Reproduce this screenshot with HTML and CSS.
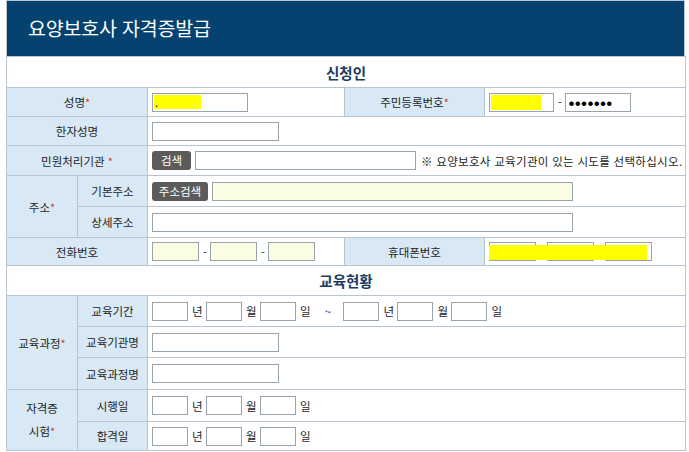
FILE: index.html
```html
<!DOCTYPE html>
<html lang="ko">
<head>
<meta charset="utf-8">
<title>요양보호사 자격증발급</title>
<link rel="stylesheet" href="styles.css">
</head>
<body>
<div class="wrap">
  <div class="head"><h1>요양보호사 자격증발급</h1></div>
  <table class="form">
    <colgroup>
      <col class="c1"><col class="c2"><col class="c3"><col class="c4"><col class="c5">
    </colgroup>
    <tr class="r31"><td colspan="5" class="sec">신청인</td></tr>
    <tr class="r29">
      <th colspan="2">성명<span class="req">*</span></th>
      <td><div class="line"><input class="in w96 redact" type="text" value="."></div></td>
      <th>주민등록번호<span class="req">*</span></th>
      <td><div class="line"><input class="in w65 redact2" type="text"><span class="dash">-</span><input class="in w66 pw" type="text" value="●●●●●●●"></div></td>
    </tr>
    <tr class="r29">
      <th colspan="2">한자성명</th>
      <td colspan="3"><div class="line"><input class="in w126" type="text"></div></td>
    </tr>
    <tr class="r30">
      <th colspan="2">민원처리기관 <span class="req">*</span></th>
      <td colspan="3"><div class="line"><button class="btn b39">검색</button><input class="in w221" type="text"><span class="note">※ 요양보호사 교육기관이 있는 시도를 선택하십시오.</span></div></td>
    </tr>
    <tr class="r31">
      <th rowspan="2">주소<span class="req">*</span></th>
      <th>기본주소</th>
      <td colspan="3"><div class="line"><button class="btn b56">주소검색</button><input class="in w360 yel" type="text"></div></td>
    </tr>
    <tr class="r31">
      <th>상세주소</th>
      <td colspan="3"><div class="line"><input class="in w421" type="text"></div></td>
    </tr>
    <tr class="r28">
      <th colspan="2">전화번호</th>
      <td><div class="line"><input class="in w47 yel" type="text"><span class="dash">-</span><input class="in w47 yel" type="text"><span class="dash">-</span><input class="in w47 yel" type="text"></div></td>
      <th>휴대폰번호</th>
      <td><div class="line ov"><input class="in w47" type="text"><span class="dash">-</span><input class="in w47" type="text"><span class="dash">-</span><input class="in w47" type="text"><span class="mark"></span></div></td>
    </tr>
    <tr class="r30"><td colspan="5" class="sec">교육현황</td></tr>
    <tr class="r31">
      <th rowspan="3">교육과정<span class="req">*</span></th>
      <th>교육기간</th>
      <td colspan="3"><div class="line date">
        <input class="in w36" type="text"><span>년</span><input class="in w36" type="text"><span>월</span><input class="in w36" type="text"><span>일</span>
        <span class="tilde">~</span>
        <input class="in w36" type="text"><span>년</span><input class="in w36" type="text"><span>월</span><input class="in w36" type="text"><span>일</span>
      </div></td>
    </tr>
    <tr class="r31">
      <th>교육기관명</th>
      <td colspan="3"><div class="line"><input class="in w126" type="text"></div></td>
    </tr>
    <tr class="r32">
      <th>교육과정명</th>
      <td colspan="3"><div class="line"><input class="in w126" type="text"></div></td>
    </tr>
    <tr class="r32">
      <th rowspan="2" class="two">자격증<br>시험<span class="req">*</span></th>
      <th>시행일</th>
      <td colspan="3"><div class="line date"><input class="in w36" type="text"><span>년</span><input class="in w36" type="text"><span>월</span><input class="in w36" type="text"><span>일</span></div></td>
    </tr>
    <tr class="r29">
      <th>합격일</th>
      <td colspan="3"><div class="line date"><input class="in w36" type="text"><span>년</span><input class="in w36" type="text"><span>월</span><input class="in w36" type="text"><span>일</span></div></td>
    </tr>
  </table>
</div>
</body>
</html>
```

FILE: styles.css
```css
* { box-sizing: border-box; }
html, body { margin: 0; padding: 0; background: #fff; }
body {
  font-family: "Noto Sans CJK KR", "Noto Sans", sans-serif;
  font-size: 11.5px;
  color: #1e1e1e;
}
.wrap { margin-left: 6px; width: 679px; }
.head {
  height: 56px;
  background: #05426f;
  border: 1px solid #b8c7d3;
  border-bottom: none;
  padding-left: 21px;
  display: flex;
  align-items: center;
}
.head h1 {
  margin: 0;
  color: #fff;
  font-size: 19.5px;
  font-weight: 400;
  letter-spacing: -0.2px;
  position: relative;
  top: -1px;
}
.form {
  width: 679px;
  border-collapse: collapse;
  table-layout: fixed;
}
.c1 { width: 71px; }
.c2 { width: 70px; }
.c3 { width: 197px; }
.c4 { width: 140px; }
.c5 { width: 201px; }
.form th, .form td {
  border: 1px solid #b6c5d1;
  padding: 0;
}
.form th {
  background: #d9e8f5;
  font-weight: 400;
  text-align: center;
  color: #1e1e1e;
}
.form td { padding-left: 4px; background: #fff; }
.form td.sec {
  padding: 0;
  text-align: center;
  font-weight: 700;
  font-size: 14.5px;
  color: #1d3b62;
}
.r28 { height: 28px; }
.r29 { height: 29px; }
.r30 { height: 30px; }
.r31 { height: 31px; }
.r32 { height: 32px; }
.req { color: #c4452c; font-size: 11px; }
.two { line-height: 23px; padding-top: 6px; }
.line { display: flex; align-items: center; gap: 4px; white-space: nowrap; }
.ov { position: relative; }
.in {
  height: 19px;
  border: 1px solid #97a4ae;
  background: #fff;
  padding: 0 3px;
  margin: 0;
  font-family: inherit;
  font-size: 11px;
  color: #000;
  outline: none;
}
.yel { background: #fbfde2; }
.redact { background: linear-gradient(#ff0, #ff0) 1px 1px / 47px 14px no-repeat, #fff; padding-left: 2px; }
.redact2 { background: linear-gradient(#ff0, #ff0) 1px 1px / 50px 15px no-repeat, #fff; }
.pw { font-size: 5px; letter-spacing: 1.3px; padding-left: 3px; }
.w36 { width: 36px; }
.w47 { width: 47px; }
.w65 { width: 65px; }
.w66 { width: 66px; }
.w96 { width: 96px; }
.w126 { width: 127px; }
.w221 { width: 221px; }
.w360 { width: 361px; }
.w421 { width: 421px; }
.dash { width: 3px; text-align: center; font-size: 11px; }
.btn {
  height: 19px;
  border: none;
  border-radius: 3px;
  background: #5b5b5b;
  color: #fff;
  font-family: inherit;
  font-size: 11.5px;
  padding: 0;
  margin: 0;
  line-height: 19px;
  text-align: center;
}
.b39 { width: 39px; }
.b56 { width: 56px; }
.note { margin-left: 1px; letter-spacing: 0.3px; }
.date .in + span { width: 10px; }
.date .tilde { width: auto; margin: 0 8px 0 11px; }
.mark {
  position: absolute;
  left: 0;
  top: 3px;
  width: 158px;
  height: 15px;
  background: #ff0;
}
```
